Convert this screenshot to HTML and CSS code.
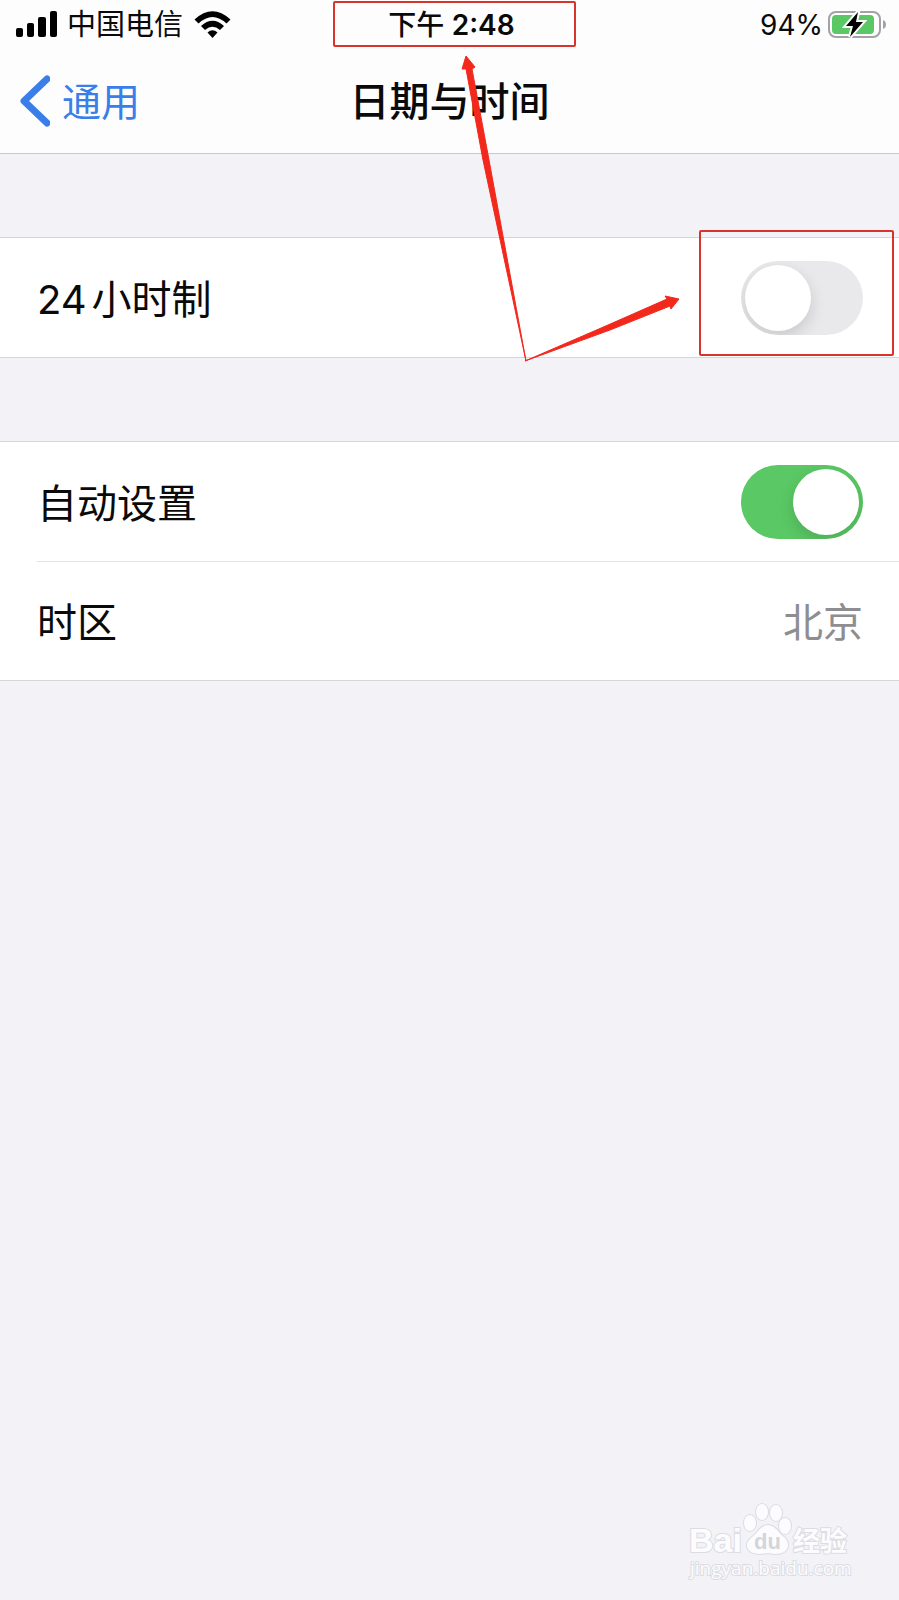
FILE: index.html
```html
<!DOCTYPE html>
<html lang="zh-CN">
<head>
    <meta charset="UTF-8">
    <meta name="viewport" content="width=device-width, initial-scale=1.0">
    <title>日期与时间</title>
    <link rel="stylesheet" href="styles.css">
</head>
<body>
    <header class="header">
        <div class="status-bar">
            <div class="status-left">
                <svg class="signal" viewBox="0 0 42 27" width="42" height="27" aria-hidden="true">
                    <rect x="0" y="17" width="7" height="9" rx="2"/>
                    <rect x="11" y="12" width="7" height="14" rx="2"/>
                    <rect x="22" y="6" width="8" height="20" rx="2"/>
                    <rect x="34" y="0" width="7" height="26" rx="2"/>
                </svg>
                <span>中国电信</span>
                <svg viewBox="0 0 37 27" width="37" height="27" aria-hidden="true">
                    <path d="M0.5 8.5 Q18.5 -8 36.5 8.5 L32.5 12.5 Q18.5 -0.5 4.5 12.5 Z"/>
                    <path d="M7 15 Q18.5 4.5 30 15 L26 19 Q18.5 12.5 11 19 Z"/>
                    <path d="M13.5 21.5 Q18.5 17 23.5 21.5 L18.5 27 Z"/>
                </svg>
            </div>
            <div class="status-time">下午 <span class="clock">2:48</span></div>
            <div class="status-right">
                <span>94%</span>
                <svg viewBox="0 0 60 30" width="60" height="30" aria-hidden="true">
                    <rect x="2" y="2" width="51" height="25" rx="7" fill="#fff" stroke="#a2a2a7" stroke-width="2"/>
                    <rect x="5" y="5" width="42" height="19" rx="4" fill="#5ac864"/>
                    <path d="M56 10 Q59 11 59 14.5 Q59 18 56 19 Z" fill="#a2a2a7"/>
                    <path d="M31 2 L19 16 H26 L23 27 L36 12 H29 Z" fill="#000" stroke="#fff" stroke-width="4" paint-order="stroke"/>
                </svg>
            </div>
        </div>
        <nav class="nav-bar">
            <a class="back" href="#">
                <svg viewBox="0 0 30 52" width="30" height="52" aria-hidden="true">
                    <path d="M27 4 L4 26 L27 48" fill="none" stroke="#3a7eea" stroke-width="7" stroke-linecap="round" stroke-linejoin="round"/>
                </svg>
                <span class="nav-text">通用</span>
            </a>
            <h1 class="nav-text">日期与时间</h1>
        </nav>
    </header>

    <main>
        <section class="group">
            <div class="row">
                <label for="hour24"><span class="num">24</span>小时制</label>
                <input class="switch" type="checkbox" id="hour24">
            </div>
        </section>
        <section class="group">
            <div class="row">
                <label for="autoSet">自动设置</label>
                <input class="switch" type="checkbox" id="autoSet" checked>
            </div>
            <div class="row">
                <span>时区</span>
                <span class="value">北京</span>
            </div>
        </section>
    </main>

    <footer class="watermark">
        <svg viewBox="0 0 170 90" width="170" height="90">
            <g fill="#fcfcff" stroke="#dcdce1" stroke-width="2" paint-order="stroke">
                <text class="wm-latin" x="1" y="56" font-size="34">Bai</text>
                <ellipse cx="62" cy="27" rx="6" ry="8"/>
                <ellipse cx="74" cy="16" rx="6" ry="8"/>
                <ellipse cx="88" cy="17" rx="6" ry="8"/>
                <ellipse cx="97" cy="30" rx="6" ry="8"/>
                <path d="M70 35 Q80 23 90 35 Q92 38 97 42 Q102 47 99 53 Q95 60 80 57 Q64 60 60 53 Q57 47 63 42 Q68 38 70 35 Z"/>
                <text class="wm-du" x="66" y="53" font-size="22">du</text>
                <text class="wm-cjk" x="105" y="55" font-size="27">经验</text>
                <text class="wm-url" x="2" y="79" font-size="19">jingyan.baidu.com</text>
            </g>
        </svg>
    </footer>

    <!-- red marks over the clock and the switch -->
    <svg class="marks" viewBox="0 0 899 370" aria-hidden="true">
        <g fill="none" stroke="#d9342c" stroke-width="2">
            <rect x="334" y="2" width="241" height="44" rx="1"/>
            <rect x="700" y="231" width="193" height="124" rx="1"/>
        </g>
        <g fill="#f3281c" stroke="#f3281c" stroke-width="1" stroke-linejoin="round">
            <path d="M466 56 L475 67 L472 69 L489 160 L526 361 L483 160 L466 69 L462 69 Z"/>
            <path d="M679 299 L671 309 L670 306 L610 330 L525 361 L608 325 L667 299 L665 296 Z"/>
        </g>
    </svg>
</body>
</html>
```
FILE: styles.css
```css
* {
    box-sizing: border-box;
}
body {
    margin: 0;
    min-height: 100vh;
    display: flex;
    flex-direction: column;
    position: relative;
    background-color: #f2f2f7;
    color: #0a0a0a;
    font-family: Inter, "Noto Sans CJK SC", sans-serif;
    font-size: 40px;
}
.header {
    background-color: #fdfdfe;
    border-bottom: 1px solid #c9c9cc;
}
.status-bar {
    display: grid;
    grid-template-columns: 1fr auto 1fr;
    align-items: center;
    height: 49px;
    padding: 0 12px 0 16px;
    font-size: 28px;
    line-height: 40px;
}
.status-left {
    display: flex;
    align-items: center;
    gap: 11px;
    font-size: 29px;
}
.signal {
    margin-right: -2px;
}
.status-time {
    font-weight: 500;
}
.clock {
    font-weight: 600;
}
.status-right {
    display: flex;
    align-items: center;
    justify-content: flex-end;
    gap: 4px;
}
.nav-bar {
    display: grid;
    grid-template-columns: 1fr auto 1fr;
    align-items: center;
    height: 104px;
    padding: 0 20px;
}
.back {
    display: flex;
    align-items: center;
    gap: 12px;
    color: #3a7eea;
    font-size: 39px;
    text-decoration: none;
}
.nav-text {
    padding-bottom: 4px;
}
h1 {
    margin: 0;
    font-size: 40px;
    font-weight: 500;
}
.group {
    margin-top: 83px;
    background-color: #fff;
    border-top: 1px solid #d6d6d9;
    border-bottom: 1px solid #d6d6d9;
}
.row {
    display: flex;
    align-items: center;
    justify-content: space-between;
    height: 119px;
    margin-left: 37px;
    padding-right: 36px;
}
.row + .row {
    border-top: 1px solid #e2e2e5;
}
.row label,
.row span {
    padding-bottom: 2px;
}
.num {
    margin-right: 5px;
}
.value {
    color: #8e8e90;
}
.switch {
    appearance: none;
    flex: none;
    width: 122px;
    height: 74px;
    margin: 0;
    padding: 4px;
    border-radius: 37px;
    background-color: #e9e9eb;
    overflow: hidden;
    cursor: pointer;
}
.switch::before {
    content: "";
    display: block;
    width: 66px;
    height: 66px;
    border-radius: 50%;
    background-color: #fff;
    box-shadow: 0 6px 16px rgba(0, 0, 0, 0.14);
}
.switch:checked {
    background-color: #5ac864;
}
.switch:checked::before {
    margin-left: auto;
}
.watermark {
    display: flex;
    justify-content: flex-end;
    margin-top: auto;
    padding: 0 41px 14px 0;
}
.wm-latin,
.wm-du {
    font-family: "Liberation Sans", sans-serif;
    font-weight: bold;
}
.wm-du {
    fill: #d4d4da;
    stroke: none;
}
.wm-cjk {
    font-family: "Noto Sans CJK SC", sans-serif;
    font-weight: bold;
}
.wm-url {
    font-family: "Open Sans", sans-serif;
}
.marks {
    position: absolute;
    top: 0;
    left: 0;
    width: 100%;
    pointer-events: none;
}
```
